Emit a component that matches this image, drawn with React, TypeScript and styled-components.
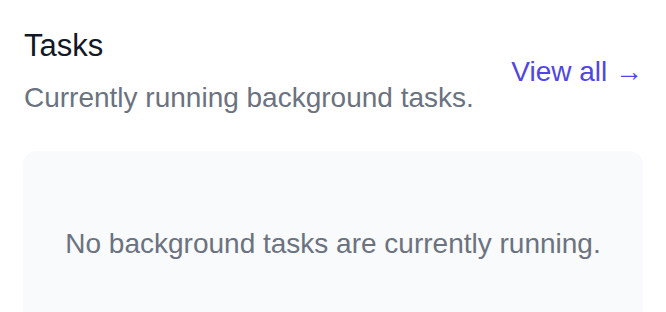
import React from 'react';
import styled, { createGlobalStyle } from 'styled-components';

const GlobalStyle = createGlobalStyle`
  html, body {
    margin: 0;
    padding: 0;
    background: #ffffff;
  }
  body {
    font-family: "Liberation Sans", Arial, sans-serif;
    -webkit-font-smoothing: antialiased;
  }
`;

const Card = styled.section`
  box-sizing: border-box;
  width: 666px;
  height: 312px;
  overflow: hidden;
  padding: 25px 23px 0 23px;
  background: #ffffff;
`;

const Header = styled.header`
  display: flex;
  align-items: center;
  justify-content: space-between;
  gap: 16px;
  padding-left: 1px;
`;

const HeaderText = styled.div`
  display: flex;
  flex-direction: column;
`;

const Title = styled.h2`
  margin: 0;
  font-size: 31px;
  line-height: 42px;
  font-weight: 400;
  color: #111827;
`;

const Subtitle = styled.p`
  margin: 11px 0 0;
  font-size: 28px;
  line-height: 40px;
  color: #6b7280;
`;

const ViewAll = styled.a`
  font-size: 28px;
  line-height: 40px;
  color: #4f46e5;
  text-decoration: none;
  white-space: nowrap;
  cursor: pointer;
`;

const EmptyPanel = styled.div`
  margin-top: 33px;
  height: 220px;
  box-sizing: border-box;
  padding-top: 73px;
  border-radius: 14px;
  background: #f9fafb;
  text-align: center;
`;

const EmptyText = styled.p`
  margin: 0;
  font-size: 28px;
  line-height: 40px;
  color: #6b7280;
`;

export default function App() {
  return (
    <>
      <GlobalStyle />
      <Card>
        <Header>
          <HeaderText>
            <Title>Tasks</Title>
            <Subtitle>Currently running background tasks.</Subtitle>
          </HeaderText>
          <ViewAll href="#">View all →</ViewAll>
        </Header>
        <EmptyPanel>
          <EmptyText>No background tasks are currently running.</EmptyText>
        </EmptyPanel>
      </Card>
    </>
  );
}
